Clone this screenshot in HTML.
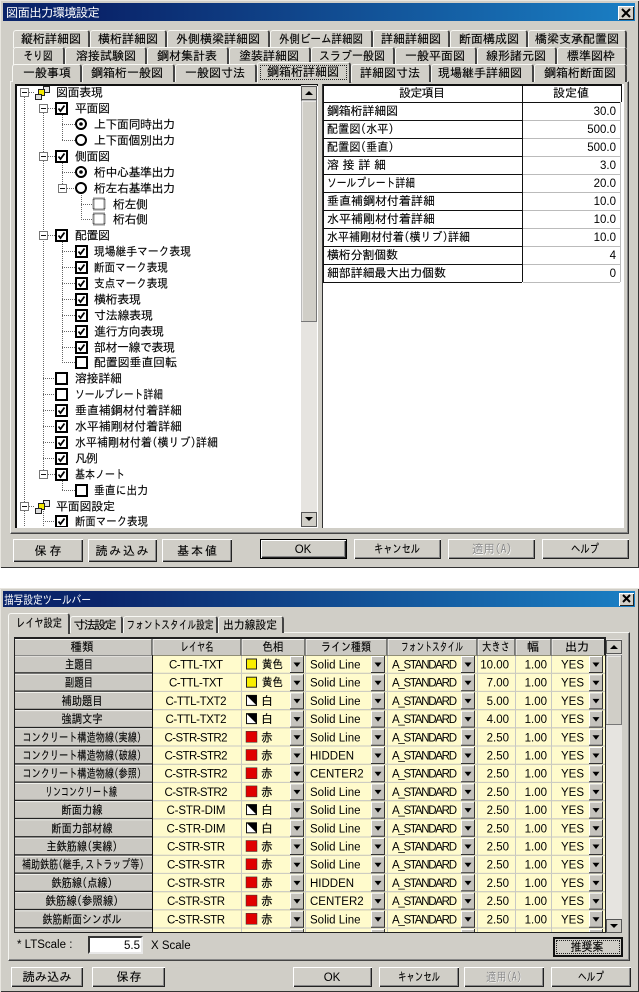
<!DOCTYPE html>
<html lang="ja"><head><meta charset="utf-8"><title>図面出力環境設定</title>
<style>
html,body{margin:0;padding:0;background:#fff}
#p{position:relative;width:639px;height:992px;overflow:hidden;background:#fff}
#p div{position:absolute;box-sizing:border-box}
.w{background:#d0cec7;box-shadow:inset 1px 1px #e8e6e0,inset -1px -1px #333}
.tb{background:linear-gradient(90deg,#0a246a 0,#0a246a 15%,#1a7fc4 100%)}
.c{background:#d4d0c8;box-shadow:inset 1px 1px #fff,inset -1px -1px #222}
.pn{background:#d0cec7;border:1px solid;border-color:#f4f4f0 #333 #444 #f4f4f0;box-shadow:inset -1px -1px #888}
.t{background:#d0cec7;border-top:1px solid #f8f8f4;border-left:1px solid #f8f8f4;border-right:2px solid #444;border-radius:3px 3px 0 0}
.b{background:#d0cec7;box-shadow:inset 1px 1px #fff,inset -1px -1px #222,inset -2px -2px #888}
.d{border:1px solid #000;box-shadow:inset 1px 1px #fff,inset -1px -1px #222,inset -2px -2px #888}
svg{position:absolute;left:0;top:0}
text{font:12px "IPAGothic","Noto Sans CJK JP",sans-serif;fill:#000;stroke:#000;stroke-width:.12px}
.l{font:11.5px "Liberation Sans",sans-serif;stroke:none}
.w1{fill:#fff;font-size:12.5px;stroke:none}
.g{fill:#888;stroke:none}
.m{text-anchor:middle}
.e{text-anchor:end}
</style></head><body><div id="p">
<div class="w" style="left:0;top:0;width:639px;height:568px"></div>
<div class="tb" style="left:3px;top:3px;width:632px;height:18px"></div>
<div class="c" style="left:618px;top:6px;width:16px;height:14px"></div>
<div class="pn" style="left:10px;top:81px;width:619px;height:453px"></div>
<div class="t" style="left:13px;top:30px;width:77px;height:18px"></div>
<div class="t" style="left:90px;top:30px;width:77px;height:18px"></div>
<div class="t" style="left:167px;top:30px;width:103px;height:18px"></div>
<div class="t" style="left:270px;top:30px;width:103px;height:18px"></div>
<div class="t" style="left:373px;top:30px;width:77px;height:18px"></div>
<div class="t" style="left:450px;top:30px;width:78px;height:18px"></div>
<div class="t" style="left:528px;top:30px;width:99px;height:18px"></div>
<div class="t" style="left:13px;top:47px;width:52px;height:18px"></div>
<div class="t" style="left:65px;top:47px;width:82px;height:18px"></div>
<div class="t" style="left:147px;top:47px;width:82px;height:18px"></div>
<div class="t" style="left:229px;top:47px;width:82px;height:18px"></div>
<div class="t" style="left:311px;top:47px;width:84px;height:18px"></div>
<div class="t" style="left:395px;top:47px;width:82px;height:18px"></div>
<div class="t" style="left:477px;top:47px;width:80px;height:18px"></div>
<div class="t" style="left:557px;top:47px;width:70px;height:18px"></div>
<div class="t" style="left:12px;top:64px;width:70px;height:18px"></div>
<div class="t" style="left:82px;top:64px;width:93px;height:18px"></div>
<div class="t" style="left:175px;top:64px;width:82px;height:18px"></div>
<div class="t" style="left:257px;top:62px;width:94px;height:21px;border-right:2px solid #444"></div>
<div style="left:260px;top:65px;width:87px;height:15px;border:1px dotted #222"></div>
<div class="t" style="left:351px;top:64px;width:80px;height:18px"></div>
<div class="t" style="left:431px;top:64px;width:103px;height:18px"></div>
<div class="t" style="left:534px;top:64px;width:93px;height:18px"></div>
<div class="b" style="left:13px;top:539px;width:70px;height:23px"></div>
<div class="b" style="left:88px;top:539px;width:69px;height:23px"></div>
<div class="b" style="left:162px;top:539px;width:70px;height:23px"></div>
<div class="b d" style="left:260px;top:539px;width:87px;height:20px"></div>
<div class="b" style="left:354px;top:539px;width:87px;height:20px"></div>
<div class="b" style="left:448px;top:539px;width:87px;height:20px"></div>
<div class="b" style="left:542px;top:539px;width:87px;height:20px"></div>

<div class="w" style="left:0;top:588px;width:639px;height:404px"></div>
<div class="tb" style="left:3px;top:591px;width:632px;height:16px"></div>
<div class="c" style="left:619px;top:593px;width:15px;height:13px"></div>
<div class="pn" style="left:8px;top:632px;width:622px;height:329px"></div>
<div class="t" style="left:70px;top:616px;width:53px;height:17px"></div>
<div class="t" style="left:123px;top:616px;width:95px;height:17px"></div>
<div class="t" style="left:218px;top:616px;width:66px;height:17px"></div>
<div class="t" style="left:8px;top:613px;width:62px;height:21px"></div>
<div style="left:88px;top:936px;width:55px;height:18px;background:#fff;border:2px solid;border-color:#333 #e8e8e8 #e8e8e8 #333"></div>
<div class="d" style="left:553px;top:937px;width:70px;height:20px;background:#d0cec7;border:2px solid #111;box-shadow:none"></div>
<div style="left:556px;top:940px;width:64px;height:14px;border:1px dotted #222"></div>
<div class="b" style="left:11px;top:967px;width:72px;height:20px"></div>
<div class="b" style="left:92px;top:967px;width:73px;height:20px"></div>
<div class="b" style="left:293px;top:967px;width:79px;height:20px"></div>
<div class="b" style="left:379px;top:967px;width:80px;height:20px"></div>
<div class="b" style="left:464px;top:967px;width:80px;height:20px"></div>
<div class="b" style="left:551px;top:967px;width:80px;height:20px"></div>

<svg width="639" height="992" viewBox="0 0 639 992" xmlns="http://www.w3.org/2000/svg">
<defs>
<g id="cb"><rect x="1" y="1" width="11" height="11" fill="#fff" stroke="#000" stroke-width="2"/><path d="M3.5 6.500l2 2.500 4-5.500" fill="none" stroke="#000" stroke-width="1.800"/></g>
<g id="cu"><rect x="1" y="1" width="11" height="11" fill="#fff" stroke="#000" stroke-width="2"/></g>
<g id="ro"><circle cx="6" cy="6" r="5" fill="#fff" stroke="#000" stroke-width="2"/><circle cx="6" cy="6" r="1.800" fill="#000"/></g>
<g id="ru"><circle cx="6" cy="6" r="5" fill="#fff" stroke="#000" stroke-width="2"/></g>
<g id="bx"><rect x=".5" y=".5" width="8" height="8" fill="#fff" stroke="#777"/><path d="M2 4.500h5" stroke="#111"/></g>
<g id="ic"><rect x="8.500" y=".5" width="6" height="6" fill="#e8e8e8" stroke="#222"/><rect x="3.500" y="3.500" width="6" height="6" fill="#f4e800" stroke="#222"/><rect x=".5" y="8.500" width="6" height="5" fill="#ddd" stroke="#222"/></g>
<g id="dd"><rect width="14" height="17" fill="#c4c2bc"/><path d="M.5 16.500V.5h13" fill="none" stroke="#fff"/><path d="M0 16.500h14M13.500 0v17" stroke="#333"/><path d="M3.500 6.500h7L7 11z" fill="#000"/></g>
<g id="sy"><rect x="246.500" y="3.500" width="10" height="10" fill="#f8ee00" stroke="#222"/></g>
<g id="sr"><rect x="246" y="3" width="11" height="11" fill="#e00000" stroke="#333" stroke-width=".5"/></g>
<g id="sw"><rect x="246.500" y="3.500" width="10" height="10" fill="#fff" stroke="#111"/><path d="M246.500 3.500h10v10z" fill="#000"/></g>
<g id="rb"><rect x="15" width="137" height="18.200" fill="#cbc9c3"/><path d="M15 .5h137" stroke="#f4f4f0"/><path d="M15 17.500h137" stroke="#222" stroke-width="1.400"/><rect x="153" width="452" height="18.200" fill="#fffbcc"/><path d="M153 17.700h452M241.500 0v18M305.500 0v18M387.500 0v18M477.500 0v18M515.500 0v18M551.500 0v18" stroke="#c8c8c4" fill="none"/><path d="M152.500 0v18.200" stroke="#111"/><use href="#dd" x="290" y=".5"/><use href="#dd" x="371" y=".5"/><use href="#dd" x="461" y=".5"/><use href="#dd" x="589" y=".5"/></g>
<clipPath id="cl"><rect x="14" y="636" width="592" height="296"/></clipPath>
<clipPath id="ct"><rect x="15" y="84" width="286" height="443"/></clipPath>
</defs>

<!-- window 1 titles -->
<text x="6" y="17" class="w1" textLength="94">図面出力環境設定</text>
<path d="M622 9l8 8M630 9l-8 8" stroke="#000" stroke-width="2"/>
<!-- tab labels -->
<text x="51" y="43" class="m">縦桁詳細図</text><text x="128" y="43" class="m">横桁詳細図</text><text x="218" y="43" class="m">外側横梁詳細図</text><text x="321" y="43" class="m" textLength="84" lengthAdjust="spacingAndGlyphs">外側ビーム詳細図</text><text x="411" y="43" class="m">詳細詳細図</text><text x="489" y="43" class="m">断面構成図</text><text x="577" y="43" class="m">橋梁支承配置図</text>
<text x="38" y="60" class="m" textLength="29" lengthAdjust="spacingAndGlyphs">そり図</text><text x="106" y="60" class="m">溶接試験図</text><text x="187" y="60" class="m">鋼材集計表</text><text x="269" y="60" class="m">塗装詳細図</text><text x="352" y="60" class="m" textLength="66" lengthAdjust="spacingAndGlyphs">スラブ一般図</text><text x="435" y="60" class="m">一般平面図</text><text x="516" y="60" class="m">線形諸元図</text><text x="591" y="60" class="m">標準図枠</text>
<text x="47" y="77" class="m">一般事項</text><text x="127" y="77" class="m">鋼箱桁一般図</text><text x="215" y="77" class="m">一般図寸法</text><text x="303" y="76" class="m">鋼箱桁詳細図</text><text x="390" y="77" class="m">詳細図寸法</text><text x="480" y="77" class="m">現場継手詳細図</text><text x="580" y="77" class="m">鋼箱桁断面図</text>

<!-- tree -->
<rect x="15" y="84" width="303" height="444" fill="#fff"/>
<path d="M15 85h303M16 84v444" stroke="#111" stroke-width="2" fill="none"/>
<g fill="none" stroke="#666" stroke-dasharray="1 1">
<path d="M24.500 97V527M43.500 113V474M62.500 113V140M62.500 161V188M62.500 240V362M81.500 193V219M62.500 479V490M43.500 511V527"/>
<path d="M29 92.500h6M48 108.500h7M62 124.500h13M62 140.500h13M48 156.500h7M62 172.500h13M67 188.500h8M81 204.500h12M81 219.500h12M48 235.500h7M62 251.500h13M62 267.500h13M62 283.500h13M62 299.500h13M62 315.500h13M62 331.500h13M62 347.500h13M62 362.500h13M43 378.500h12M43 394.500h12M43 410.500h12M43 426.500h12M43 442.500h12M43 458.500h12M48 474.500h7M62 490.500h13M29 506.500h6M43 521.500h12"/>
</g>
<g clip-path="url(#ct)">
<use href="#bx" x="20" y="88"/><use href="#ic" x="35" y="86"/><text x="56" y="96.500" textLength="47">図面表現</text>
<use href="#bx" x="39" y="104"/><use href="#cb" x="55" y="102"/><text x="75" y="112.500" textLength="35">平面図</text>
<use href="#ro" x="75" y="118"/><text x="94" y="128.500" textLength="81">上下面同時出力</text>
<use href="#ru" x="75" y="134"/><text x="94" y="144.500" textLength="81">上下面個別出力</text>
<use href="#bx" x="39" y="152"/><use href="#cb" x="55" y="150"/><text x="75" y="160.500" textLength="35">側面図</text>
<use href="#ro" x="75" y="166"/><text x="94" y="176.500" textLength="81">桁中心基準出力</text>
<use href="#bx" x="58" y="184"/><use href="#ru" x="75" y="182"/><text x="94" y="192.500" textLength="81">桁左右基準出力</text>
<rect x="93.500" y="198.500" width="11" height="11" fill="#fff" stroke="#222" stroke-width="2" stroke-dasharray="1 1"/><text x="113" y="208.500" textLength="35">桁左側</text>
<rect x="93.500" y="213.500" width="11" height="11" fill="#fff" stroke="#222" stroke-width="2" stroke-dasharray="1 1"/><text x="113" y="223.500" textLength="35">桁右側</text>
<use href="#bx" x="39" y="231"/><use href="#cb" x="55" y="229"/><text x="75" y="239.500" textLength="35">配置図</text>
<use href="#cb" x="75" y="245"/><text x="94" y="255.500" textLength="97" lengthAdjust="spacingAndGlyphs">現場継手マーク表現</text>
<use href="#cb" x="75" y="261"/><text x="94" y="271.500" textLength="74" lengthAdjust="spacingAndGlyphs">断面マーク表現</text>
<use href="#cb" x="75" y="277"/><text x="94" y="287.500" textLength="74" lengthAdjust="spacingAndGlyphs">支点マーク表現</text>
<use href="#cb" x="75" y="293"/><text x="94" y="303.500" textLength="47">横桁表現</text>
<use href="#cb" x="75" y="309"/><text x="94" y="319.500" textLength="59">寸法線表現</text>
<use href="#cb" x="75" y="325"/><text x="94" y="335.500" textLength="70">進行方向表現</text>
<use href="#cb" x="75" y="341"/><text x="94" y="351.500" textLength="81">部材一線で表現</text>
<use href="#cu" x="75" y="356"/><text x="94" y="366.500" textLength="83">配置図垂直回転</text>
<use href="#cu" x="55" y="372"/><text x="75" y="382.500" textLength="47">溶接詳細</text>
<use href="#cu" x="55" y="388"/><text x="75" y="398.500" textLength="88" lengthAdjust="spacingAndGlyphs">ソールプレート詳細</text>
<use href="#cb" x="55" y="404"/><text x="75" y="414.500" textLength="107">垂直補鋼材付着詳細</text>
<use href="#cb" x="55" y="420"/><text x="75" y="430.500" textLength="107">水平補剛材付着詳細</text>
<use href="#cb" x="55" y="436"/><text x="75" y="446.500" textLength="143" lengthAdjust="spacingAndGlyphs">水平補剛材付着(横リブ)詳細</text>
<use href="#cb" x="55" y="452"/><text x="75" y="462.500" textLength="23">凡例</text>
<use href="#bx" x="39" y="470"/><use href="#cb" x="55" y="468"/><text x="75" y="478.500" textLength="50" lengthAdjust="spacingAndGlyphs">基本ノート</text>
<use href="#cu" x="75" y="484"/><text x="94" y="494.500" textLength="54" lengthAdjust="spacingAndGlyphs">垂直に出力</text>
<use href="#bx" x="20" y="502"/><use href="#ic" x="35" y="500"/><text x="56" y="510.500" textLength="59">平面図設定</text>
<use href="#cb" x="55" y="515"/><text x="75" y="525.500" textLength="73" lengthAdjust="spacingAndGlyphs">断面マーク表現</text>
</g>
<rect x="301" y="85" width="16" height="442" fill="#e6e4e0"/>
<rect x="301.500" y="100.500" width="15" height="221" fill="#d0cec7" stroke="#777"/>
<path d="M302 101h14M302 101v220" stroke="#fff"/>
<rect x="301.500" y="86.500" width="15" height="13" fill="#d0cec7" stroke="#555"/><path d="M305 95h8l-4-4z" fill="#000"/>
<rect x="301.500" y="512.500" width="15" height="14" fill="#d0cec7" stroke="#555"/><path d="M305 517h8l-4 4z" fill="#000"/>

<!-- right grid -->
<rect x="322" y="84" width="302" height="444" fill="#fff"/>
<path d="M322 85h299M323 84v198" stroke="#111" stroke-width="2" fill="none"/>
<path d="M322.500 84v444" stroke="#333"/>
<path d="M323 102.500h199M323 120.500h199M323 138.500h199M323 156.500h199M323 174.500h199M323 192.500h199M323 210.500h199M323 228.500h199M323 246.500h199M323 264.500h199M323 282.500h199M522.500 84V282" stroke="#111" fill="none"/>
<path d="M523 102.500h98" stroke="#111"/>
<path d="M523 120.500h97M523 138.500h97M523 156.500h97M523 174.500h97M523 192.500h97M523 210.500h97M523 228.500h97M523 246.500h97M523 264.500h97M523 282.500h97M620.500 102V282" stroke="#bbb" fill="none"/>
<path d="M621.500 84V102" stroke="#111"/>
<text x="422" y="97" class="m" textLength="46">設定項目</text><text x="571" y="97" class="m" textLength="36">設定値</text>
<text x="327" y="115" textLength="71">鋼箱桁詳細図</text><text x="616" y="115" class="e l">30.0</text>
<text x="327" y="133" textLength="67" lengthAdjust="spacingAndGlyphs">配置図(水平)</text><text x="616" y="133" class="e l">500.0</text>
<text x="327" y="151" textLength="67" lengthAdjust="spacingAndGlyphs">配置図(垂直)</text><text x="616" y="151" class="e l">500.0</text>
<text x="327" y="169" textLength="59">溶 接 詳 細</text><text x="616" y="169" class="e l">3.0</text>
<text x="327" y="187" textLength="88" lengthAdjust="spacingAndGlyphs">ソールプレート詳細</text><text x="616" y="187" class="e l">20.0</text>
<text x="327" y="205" textLength="108">垂直補鋼材付着詳細</text><text x="616" y="205" class="e l">10.0</text>
<text x="327" y="223" textLength="108">水平補剛材付着詳細</text><text x="616" y="223" class="e l">10.0</text>
<text x="327" y="241" textLength="143" lengthAdjust="spacingAndGlyphs">水平補剛材付着(横リブ)詳細</text><text x="616" y="241" class="e l">10.0</text>
<text x="327" y="259" textLength="71">横桁分割個数</text><text x="616" y="259" class="e l">4</text>
<text x="327" y="277" textLength="119">細部詳細最大出力個数</text><text x="616" y="277" class="e l">0</text>

<!-- buttons window 1 -->
<text x="48" y="555" class="m" textLength="27">保存</text><text x="122" y="555" class="m" textLength="53">読み込み</text><text x="197" y="555" class="m" textLength="40">基本値</text>
<text x="303" y="553" class="m l">OK</text><text x="397" y="553" class="m" textLength="46" lengthAdjust="spacingAndGlyphs">キャンセル</text>
<text x="492.500" y="554" class="m" textLength="40" lengthAdjust="spacingAndGlyphs" style="fill:#fff;stroke:none">適用(A)</text><text x="492" y="553" class="m g" textLength="40" lengthAdjust="spacingAndGlyphs">適用(A)</text>
<text x="585" y="553" class="m" textLength="28" lengthAdjust="spacingAndGlyphs">ヘルプ</text>

<!-- window 2 -->
<text x="4" y="604" class="w1" style="font-size:12px" textLength="87" lengthAdjust="spacingAndGlyphs">描写設定ツールバー</text>
<path d="M623 595l7 7M630 595l-7 7" stroke="#000" stroke-width="2"/>
<text x="39" y="627" class="m" textLength="46" lengthAdjust="spacingAndGlyphs">レイヤ設定</text><text x="95" y="629" class="m" textLength="43">寸法設定</text><text x="170" y="629" class="m" textLength="87" lengthAdjust="spacingAndGlyphs">フォントスタイル設定</text><text x="250" y="629" class="m" textLength="54" lengthAdjust="spacingAndGlyphs">出力線設定</text>
<rect x="14" y="637" width="592" height="296" fill="#222"/>
<g clip-path="url(#cl)">
<path d="M15 639h590v16.500H15z" fill="#cbc9c3"/>
<path d="M15 639.500h590M153 640v15M242 640v15M306 640v15M388 640v15M478 640v15M516 640v15M552 640v15" stroke="#f4f4f0" fill="none"/>
<path d="M152 638v18M241 638v18M305 638v18M387 638v18M477 638v18M515 638v18M551 638v18M604.500 638v18M15 655.500h590" stroke="#222" fill="none"/>
<use href="#rb" y="655.500"/><use href="#rb" y="673.700"/><use href="#rb" y="691.900"/><use href="#rb" y="710.100"/><use href="#rb" y="728.300"/><use href="#rb" y="746.500"/><use href="#rb" y="764.700"/><use href="#rb" y="782.900"/><use href="#rb" y="801.100"/><use href="#rb" y="819.300"/><use href="#rb" y="837.500"/><use href="#rb" y="855.700"/><use href="#rb" y="873.900"/><use href="#rb" y="892.100"/><use href="#rb" y="910.300"/><use href="#rb" y="928.500"/>
</g>
<text x="82" y="651" class="m" textLength="23" lengthAdjust="spacingAndGlyphs">種類</text><text x="197" y="651" class="m" textLength="33" lengthAdjust="spacingAndGlyphs">レイヤ名</text><text x="273" y="651" class="m" textLength="21" lengthAdjust="spacingAndGlyphs">色相</text><text x="346" y="651" class="m" textLength="50" lengthAdjust="spacingAndGlyphs">ライン種類</text><text x="432" y="651" class="m" textLength="62" lengthAdjust="spacingAndGlyphs">フォントスタイル</text><text x="496" y="651" class="m" textLength="28" lengthAdjust="spacingAndGlyphs">大きさ</text><text x="533" y="651" class="m">幅</text><text x="577" y="651" class="m">出力</text>
<g transform="translate(0,655.500)"><text x="79" y="13" class="m" textLength="28" lengthAdjust="spacingAndGlyphs">主題目</text><text x="196" y="13" class="m l" textLength="54">C-TTL-TXT</text><use href="#sy"/><text x="262" y="13" textLength="21" lengthAdjust="spacingAndGlyphs">黄色</text><text x="310" y="13" class="l">Solid Line</text><text x="392" y="13" class="l" textLength="65">A_STANDARD</text><text x="509" y="13" class="e l">10.00</text><text x="547" y="13" class="e l">1.00</text><text x="584" y="13" class="e l">YES</text></g>
<g transform="translate(0,673.700)"><text x="79" y="13" class="m" textLength="28" lengthAdjust="spacingAndGlyphs">副題目</text><text x="196" y="13" class="m l" textLength="54">C-TTL-TXT</text><use href="#sy"/><text x="262" y="13" textLength="21" lengthAdjust="spacingAndGlyphs">黄色</text><text x="310" y="13" class="l">Solid Line</text><text x="392" y="13" class="l" textLength="65">A_STANDARD</text><text x="509" y="13" class="e l">7.00</text><text x="547" y="13" class="e l">1.00</text><text x="584" y="13" class="e l">YES</text></g>
<g transform="translate(0,691.900)"><text x="82" y="13" class="m" textLength="41" lengthAdjust="spacingAndGlyphs">補助題目</text><text x="196" y="13" class="m l" textLength="61">C-TTL-TXT2</text><use href="#sw"/><text x="261" y="13">白</text><text x="310" y="13" class="l">Solid Line</text><text x="392" y="13" class="l" textLength="65">A_STANDARD</text><text x="509" y="13" class="e l">5.00</text><text x="547" y="13" class="e l">1.00</text><text x="584" y="13" class="e l">YES</text></g>
<g transform="translate(0,710.100)"><text x="82" y="13" class="m" textLength="41" lengthAdjust="spacingAndGlyphs">強調文字</text><text x="196" y="13" class="m l" textLength="61">C-TTL-TXT2</text><use href="#sw"/><text x="261" y="13">白</text><text x="310" y="13" class="l">Solid Line</text><text x="392" y="13" class="l" textLength="65">A_STANDARD</text><text x="509" y="13" class="e l">4.00</text><text x="547" y="13" class="e l">1.00</text><text x="584" y="13" class="e l">YES</text></g>
<g transform="translate(0,728.300)"><text x="82" y="13" class="m" textLength="119" lengthAdjust="spacingAndGlyphs">コンクリート構造物線(実線)</text><text x="196" y="13" class="m l" textLength="63">C-STR-STR2</text><use href="#sr"/><text x="261" y="13">赤</text><text x="310" y="13" class="l">Solid Line</text><text x="392" y="13" class="l" textLength="65">A_STANDARD</text><text x="509" y="13" class="e l">2.50</text><text x="547" y="13" class="e l">1.00</text><text x="584" y="13" class="e l">YES</text></g>
<g transform="translate(0,746.500)"><text x="82" y="13" class="m" textLength="119" lengthAdjust="spacingAndGlyphs">コンクリート構造物線(破線)</text><text x="196" y="13" class="m l" textLength="63">C-STR-STR2</text><use href="#sr"/><text x="261" y="13">赤</text><text x="310" y="13" class="l">HIDDEN</text><text x="392" y="13" class="l" textLength="65">A_STANDARD</text><text x="509" y="13" class="e l">2.50</text><text x="547" y="13" class="e l">1.00</text><text x="584" y="13" class="e l">YES</text></g>
<g transform="translate(0,764.700)"><text x="82" y="13" class="m" textLength="119" lengthAdjust="spacingAndGlyphs">コンクリート構造物線(参照)</text><text x="196" y="13" class="m l" textLength="63">C-STR-STR2</text><use href="#sr"/><text x="261" y="13">赤</text><text x="310" y="13" class="l">CENTER2</text><text x="392" y="13" class="l" textLength="65">A_STANDARD</text><text x="509" y="13" class="e l">2.50</text><text x="547" y="13" class="e l">1.00</text><text x="584" y="13" class="e l">YES</text></g>
<g transform="translate(0,782.900)"><text x="81" y="13" class="m" textLength="72" lengthAdjust="spacingAndGlyphs">リンコンクリート線</text><text x="196" y="13" class="m l" textLength="63">C-STR-STR2</text><use href="#sr"/><text x="261" y="13">赤</text><text x="310" y="13" class="l">Solid Line</text><text x="392" y="13" class="l" textLength="65">A_STANDARD</text><text x="509" y="13" class="e l">2.50</text><text x="547" y="13" class="e l">1.00</text><text x="584" y="13" class="e l">YES</text></g>
<g transform="translate(0,801.100)"><text x="82" y="13" class="m" textLength="41" lengthAdjust="spacingAndGlyphs">断面力線</text><text x="196" y="13" class="m l" textLength="59">C-STR-DIM</text><use href="#sw"/><text x="261" y="13">白</text><text x="310" y="13" class="l">Solid Line</text><text x="392" y="13" class="l" textLength="65">A_STANDARD</text><text x="509" y="13" class="e l">2.50</text><text x="547" y="13" class="e l">1.00</text><text x="584" y="13" class="e l">YES</text></g>
<g transform="translate(0,819.300)"><text x="82" y="13" class="m" textLength="61" lengthAdjust="spacingAndGlyphs">断面力部材線</text><text x="196" y="13" class="m l" textLength="59">C-STR-DIM</text><use href="#sw"/><text x="261" y="13">白</text><text x="310" y="13" class="l">Solid Line</text><text x="392" y="13" class="l" textLength="65">A_STANDARD</text><text x="509" y="13" class="e l">2.50</text><text x="547" y="13" class="e l">1.00</text><text x="584" y="13" class="e l">YES</text></g>
<g transform="translate(0,837.500)"><text x="82" y="13" class="m" textLength="71" lengthAdjust="spacingAndGlyphs">主鉄筋線(実線)</text><text x="196" y="13" class="m l" textLength="58">C-STR-STR</text><use href="#sr"/><text x="261" y="13">赤</text><text x="310" y="13" class="l">Solid Line</text><text x="392" y="13" class="l" textLength="65">A_STANDARD</text><text x="509" y="13" class="e l">2.50</text><text x="547" y="13" class="e l">1.00</text><text x="584" y="13" class="e l">YES</text></g>
<g transform="translate(0,855.700)"><text x="83" y="13" class="m" textLength="122" lengthAdjust="spacingAndGlyphs">補助鉄筋(継手,ストラップ等)</text><text x="196" y="13" class="m l" textLength="58">C-STR-STR</text><use href="#sr"/><text x="261" y="13">赤</text><text x="310" y="13" class="l">Solid Line</text><text x="392" y="13" class="l" textLength="65">A_STANDARD</text><text x="509" y="13" class="e l">2.50</text><text x="547" y="13" class="e l">1.00</text><text x="584" y="13" class="e l">YES</text></g>
<g transform="translate(0,873.900)"><text x="82" y="13" class="m" textLength="61" lengthAdjust="spacingAndGlyphs">鉄筋線(点線)</text><text x="196" y="13" class="m l" textLength="58">C-STR-STR</text><use href="#sr"/><text x="261" y="13">赤</text><text x="310" y="13" class="l">HIDDEN</text><text x="392" y="13" class="l" textLength="65">A_STANDARD</text><text x="509" y="13" class="e l">2.50</text><text x="547" y="13" class="e l">1.00</text><text x="584" y="13" class="e l">YES</text></g>
<g transform="translate(0,892.100)"><text x="82" y="13" class="m" textLength="73" lengthAdjust="spacingAndGlyphs">鉄筋線(参照線)</text><text x="196" y="13" class="m l" textLength="58">C-STR-STR</text><use href="#sr"/><text x="261" y="13">赤</text><text x="310" y="13" class="l">CENTER2</text><text x="392" y="13" class="l" textLength="65">A_STANDARD</text><text x="509" y="13" class="e l">2.50</text><text x="547" y="13" class="e l">1.00</text><text x="584" y="13" class="e l">YES</text></g>
<g transform="translate(0,910.300)"><text x="82" y="13" class="m" textLength="79" lengthAdjust="spacingAndGlyphs">鉄筋断面シンボル</text><text x="196" y="13" class="m l" textLength="58">C-STR-STR</text><use href="#sr"/><text x="261" y="13">赤</text><text x="310" y="13" class="l">Solid Line</text><text x="392" y="13" class="l" textLength="65">A_STANDARD</text><text x="509" y="13" class="e l">2.50</text><text x="547" y="13" class="e l">1.00</text><text x="584" y="13" class="e l">YES</text></g>
<!-- scrollbar 2 -->
<rect x="606" y="639" width="16" height="294" fill="#e6e4e0"/>
<rect x="606.500" y="655.500" width="15" height="69" fill="#d0cec7" stroke="#777"/><path d="M607 656h14M607 656v68" stroke="#fff"/>
<rect x="606.500" y="640.500" width="15" height="13" fill="#d0cec7" stroke="#555"/><path d="M610 649h8l-4-4z" fill="#000"/>
<rect x="606.500" y="919.500" width="15" height="13" fill="#d0cec7" stroke="#555"/><path d="M610 924h8l-4 4z" fill="#000"/>
<!-- LTScale -->
<text x="17" y="948" class="l">* LTScale :</text><text x="140" y="949" class="e l">5.5</text><text x="151" y="949" class="l">X Scale</text>
<text x="587" y="951" class="m" textLength="33" lengthAdjust="spacingAndGlyphs">推奨案</text>
<text x="47" y="981" class="m" textLength="49" lengthAdjust="spacingAndGlyphs">読み込み</text><text x="129" y="981" class="m" textLength="25">保存</text><text x="332" y="981" class="m l">OK</text><text x="419" y="981" class="m" textLength="42" lengthAdjust="spacingAndGlyphs">キャンセル</text><text x="504.500" y="981.500" class="m" textLength="36" lengthAdjust="spacingAndGlyphs" style="fill:#fff;stroke:none">適用(A)</text><text x="504" y="981" class="m g" textLength="36" lengthAdjust="spacingAndGlyphs">適用(A)</text><text x="591" y="981" class="m" textLength="26" lengthAdjust="spacingAndGlyphs">ヘルプ</text>
</svg>
</div></body></html>
